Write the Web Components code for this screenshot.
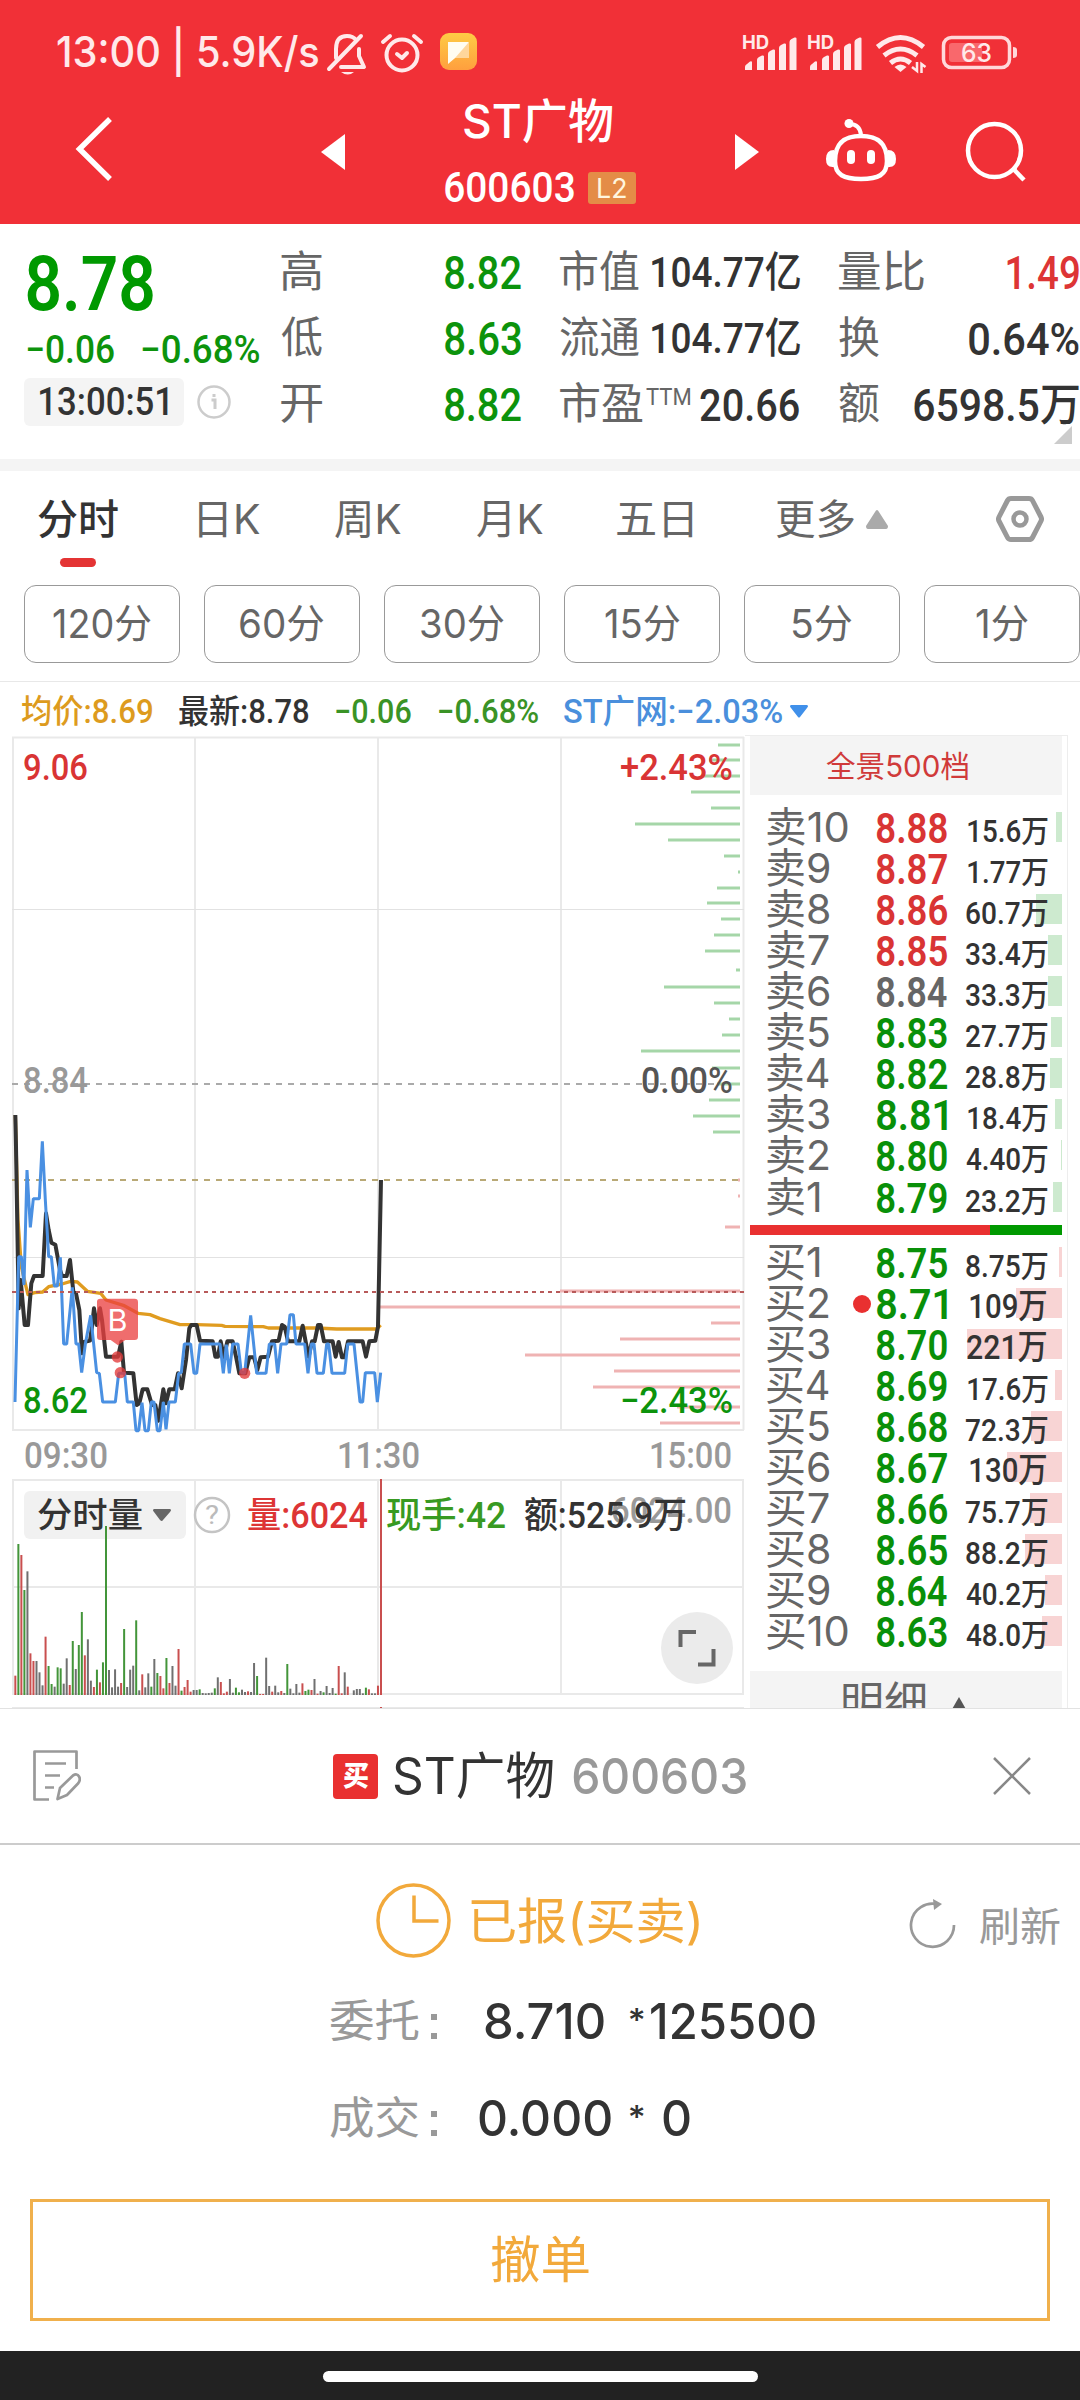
<!DOCTYPE html>
<html lang="zh-CN">
<head>
<meta charset="utf-8">
<title>ST广物 600603</title>
<style>
html,body{margin:0;padding:0;background:#fff}
body{width:1080px;height:2400px;overflow:hidden;font-family:Inter,"Noto Sans CJK SC",sans-serif;color:#333}
</style>
</head>
<body>
<stock-page></stock-page>
<script>
const DIN = "Roboto,'Noto Sans CJK SC',sans-serif";
const define = (name, html) => customElements.define(name, class extends HTMLElement {
  connectedCallback() {
    if (this.shadowRoot) return;
    const root = this.attachShadow({ mode: 'open' });
    root.innerHTML = typeof html === 'function' ? html(this) : html;
  }
});

/* One line of text whose drawn glyphs span exactly `w` pixels. */
const ruler = document.createElement('canvas').getContext('2d');
class FitText extends HTMLElement {
  connectedCallback() {
    if (this.shadowRoot) return;
    const root = this.attachShadow({ mode: 'open' });
    root.innerHTML = `<style>:host{display:block;flex:none;line-height:1;white-space:nowrap}
      span{display:inline-block;transform-origin:0 50%}</style><span><slot></slot></span>`;
    const w = +this.getAttribute('w');
    this.style.width = w + 'px';
    const cs = getComputedStyle(this);
    ruler.font = `${cs.fontWeight} ${cs.fontSize} ${cs.fontFamily}`;
    const m = ruler.measureText(this.textContent);
    const s = w / (m.actualBoundingBoxLeft + m.actualBoundingBoxRight);
    root.querySelector('span').style.transform = `translateX(${m.actualBoundingBoxLeft * s}px) scaleX(${s})`;
  }
}
customElements.define('fit-text', FitText);

const bars = '<path d="M0 70v-3q0-2 2-3l3-2.500q2-1 2 1v7.500zM12 70v-10q0-2 2-3l3-1.500q2-.5 2 1v13.500zM23 70v-16q0-2 2-3l3-1.500q2-.5 2 1v19.500zM34 70v-22q0-2 2-3l3-1.500q2-.5 2 1v25.500zM44.500 70v-28q0-2 2-3l3-1.500q2-.5 2 1v31.500z"/>';
define('status-bar', `<style>
:host{display:flex;align-items:center;height:105px;padding-left:57px;box-sizing:border-box;color:#ffe9ea;font-weight:500}
svg{display:block;flex:none;height:105px}
</style>
<fit-text w="261" style="font-size:42.500px">13:00 | 5.9K/s</fit-text>
<svg width="162" viewBox="318 0 162 105" fill="none" stroke="#ffe9ea" stroke-width="4" stroke-linecap="round" stroke-linejoin="round">
<path d="M336 58V49q0-13 11-13 6 0 9 4M359 49v7l5 11H341M361 36L329 69"/><path d="M341 72h13q-6 5-13 0z" fill="#ffe9ea" stroke="none"/>
<circle cx="402" cy="55" r="15.500"/><path d="M397 54l5 4 5-5M383 42l7-6M421 42l-7-6"/>
<defs><linearGradient id="o" x2="0" y2="1"><stop stop-color="#fecb45"/><stop offset="1" stop-color="#ff9f3e"/></linearGradient></defs>
<rect x="440" y="33" width="37" height="37" rx="9" fill="url(#o)" stroke="none"/><path d="M448 43h21v15h-14l-7 5z" fill="#ffd69b" stroke="none"/><path d="M448 42h21L455 58l-7 6z" fill="#fffdf2" stroke="none"/></svg>
<svg width="280" viewBox="742 0 280 105" style="margin-left:262px" fill="#ffe9ea">
<text x="742" y="49" font-size="18.500" font-weight="700" textLength="27" font-family="Inter">HD</text>
<text x="807" y="49" font-size="18.500" font-weight="700" textLength="27" font-family="Inter">HD</text>
<g transform="translate(745)">${bars}</g><g transform="translate(810)">${bars}</g>
<g fill="none" stroke="#ffe9ea" stroke-width="5"><path d="M877.500 47q23-19 46 0M884 55.500q16.500-13 33 0M890.500 63q10-8 20 0"/></g><path d="M894.500 67q6-5 12 0l-6 5z"/>
<path d="M917 62v9l-5-4M921.500 73V64l4 3" fill="none" stroke="#ffe9ea" stroke-width="2.500"/>
<rect x="943.500" y="37.500" width="66" height="30" rx="8" fill="none" stroke="#ffd8da" stroke-width="3.500"/><path d="M1013 47q4 0 4 3v5q0 3-4 3z" fill="#ffd8da"/><path d="M949 46q0-3 3-3h30v19h-30q-3 0-3-3z" fill="#f9686c"/>
<text x="961" y="62" font-size="26" font-weight="500" textLength="31" lengthAdjust="spacingAndGlyphs" font-family="Inter">63</text></svg>`);

define('title-bar', `<style>
:host{display:flex;align-items:center;height:119px;color:#fff;font-weight:500}
svg{display:block;flex:none}
.mid{flex:none;width:190px;height:119px;margin:0 91px 0 100px;display:flex;flex-direction:column;align-items:center}
.code{display:flex;align-items:center;gap:14px;font-family:${DIN};margin-top:27px;height:32px}
.l2{background:#e48c47;border-radius:3px;width:48px;height:32px;display:flex;align-items:center;justify-content:center;color:#fff6df;font:400 27px/1 Inter}
.name{margin:-8px 0 0 -4px;height:48px}
</style>
<svg width="345" height="119" viewBox="0 105 345 119"><path d="M110 119L79.500 149L110 179" fill="none" stroke="#fff" stroke-width="5.500"/><path d="M345 134v36L321 152z" fill="#fff"/></svg>
<div class="mid"><div class="name"><fit-text w="148" style="font-size:47px">ST广物</fit-text></div>
<div class="code"><fit-text w="129" style="font-size:42px">600603</fit-text><span class="l2"><fit-text w="28">L2</fit-text></span></div></div>
<svg width="345" height="119" viewBox="735 105 345 119" fill="none" stroke="#fff" style="margin-left:9px"><path d="M735 134v36l24-18z" fill="#fff" stroke="none"/>
<path d="M861 136c-13 0-26 4-26 25 0 14 9 18 26 18s26-4 26-18c0-21-13-25-26-25z" stroke-width="4.500"/><path d="M849 124q11 0 12 11" stroke-width="4"/><g fill="#fff" stroke="none"><circle cx="849" cy="123.500" r="4.500"/><rect x="847" y="150" width="8" height="14" rx="4"/><rect x="867" y="150" width="8" height="14" rx="4"/><path d="M834 150q-8 0-8 9t8 8zM888 150q8 0 8 9t-8 8z"/></g>
<ellipse cx="994.500" cy="150.500" rx="26.500" ry="26.500" stroke-width="4.500"/><path d="M1013 168.500l11 11.500" stroke-width="4.500"/></svg>`);

define('quote-cell', `<style>:host{display:flex;justify-content:space-between;align-items:center;height:66px}
::slotted([slot=k]){color:#666;font:400 43px/1 ${DIN};position:relative;top:-1px}
::slotted(:not([slot])){font:500 44px/1 ${DIN}}</style>
<slot name="k"></slot><slot></slot>`);
const cell = (k, kw, v, vw, c, fs) => `<quote-cell><fit-text slot="k" w="${kw}">${k}</fit-text><fit-text w="${vw}" style="color:${c};font-size:${fs}px">${v}</fit-text></quote-cell>`;
const G = '#0c930c', R = '#dd3535', K = '#333';
define('quote-panel', `<style>
:host{display:flex;padding-left:24px;box-sizing:border-box;border-bottom:12px solid #f4f4f4;height:247px;font-family:${DIN};font-weight:500}
.a{width:257px;flex:none;padding-top:23px;box-sizing:border-box;color:${G}}
.p{height:74px;display:flex;align-items:center;padding-left:3px;color:#090;font-size:76px;font-weight:600}
.d{height:40px;margin-top:9px;display:flex;align-items:center;gap:28px;padding-left:3px;font-size:39px}
.t{display:flex;align-items:center;gap:12px;margin-top:8px}
.chip{background:#f4f4f4;border-radius:6px;width:160px;height:48px;display:flex;align-items:center;justify-content:center;color:#333;font-size:38px}
.c{flex:none;width:240px;padding-top:16px}
.c+.c{margin-left:39px}
.pe{display:flex;height:66px;align-items:center;color:#666;font-weight:400}
.corner{position:absolute;left:1054px;top:426px}
</style>
<div class="a"><div class="p"><fit-text w="126">8.78</fit-text></div><div class="d"><fit-text w="87">−0.06</fit-text><fit-text w="117">−0.68%</fit-text></div>
<div class="t"><div class="chip"><fit-text w="128">13:00:51</fit-text></div><svg width="36" height="36" viewBox="-18 -18 36 36"><circle r="15.500" fill="none" stroke="#ccc" stroke-width="2.500"/><path d="M-2.500-2H1V7M0-8v3" stroke="#ccc" stroke-width="3" fill="none"/></svg></div></div>
<div class="c">${cell('高', 41, '8.82', 76, G, 46)}${cell('低', 41, '8.63', 76, G, 46)}${cell('开', 41, '8.82', 76, G, 46)}</div>
<div class="c">${cell('市值', 79, '104.77亿', 148, K, 42)}${cell('流通', 79, '104.77亿', 148, K, 42)}
<div class="pe"><fit-text w="83" style="font-size:43px;margin-top:-2px">市盈</fit-text><fit-text w="44" style="font-size:24px;margin:-17px 10px 0 3px">TTM</fit-text><fit-text w="99" style="font-size:45px;color:#333;font-weight:500">20.66</fit-text></div></div>
<div class="c">${cell('量比', 85, '1.49', 72, R, 46)}${cell('换', 40, '0.64%', 110, K, 45)}${cell('额', 40, '6598.5万', 165, K, 45)}</div>
<svg class="corner" width="18" height="18"><path d="M18 0v18H0z" fill="#ccc"/></svg>`);

define('period-tabs', `<style>
:host{display:flex;align-items:center;height:114px;padding-left:38px;box-sizing:border-box;color:#666;font-size:41px;padding-bottom:18px}
.on{color:#333;font-weight:500;display:flex;flex-direction:column;align-items:center;padding-top:28px}
.on i{display:block;width:36px;height:9px;border-radius:5px;background:#e43434;margin-top:18px}
</style>
<div class="on"><fit-text w="80">分时</fit-text><i></i></div>
<fit-text w="61" style="margin-left:81px">日K</fit-text><fit-text w="66" style="margin-left:75px">周K</fit-text><fit-text w="66" style="margin-left:76px">月K</fit-text><fit-text w="76" style="margin-left:74px">五日</fit-text><fit-text w="78" style="margin-left:83px">更多</fit-text>
<svg width="22" height="19" style="margin-left:12px"><path d="M11 0q1 0 2 2l9 14q0 3-2 3H2q-2 0-2-3L9 2q1-2 2-2z" fill="#aaa"/></svg>
<svg width="48" height="46" viewBox="0 0 48 46" style="margin-left:108px" fill="none" stroke="#999" stroke-width="5" stroke-linejoin="round"><path d="M15 2.500H33Q35.500 2.500 36.500 4.500L45 21q1 2 0 4L36.500 41.500Q35.500 43.500 33 43.500H15Q12.500 43.500 11.500 41.500L3 25q-1-2 0-4L11.500 4.500Q12.500 2.500 15 2.500z"/><circle cx="24" cy="23" r="6.500" stroke-width="4.500"/></svg>`);

define('minute-chip', `<style>:host{flex:none;width:156px;height:78px;box-sizing:border-box;border:1px solid #999;border-radius:12px;display:flex;align-items:center;justify-content:center;color:#666;font-size:40px}</style><slot></slot>`);
define('minute-chips', `<style>:host{display:flex;gap:24px;padding:0 0 18px 24px;border-bottom:1px solid #e8e8e8;overflow:hidden}</style>
${[['120分', 98], ['60分', 84], ['30分', 83], ['15分', 75], ['5分', 59], ['1分', 52]].map(([t, w]) => `<minute-chip><fit-text w="${w}">${t}</fit-text></minute-chip>`).join('')}`);

define('chart-legend', `<style>:host{display:flex;align-items:center;height:53px;box-sizing:border-box;padding:5px 0 0 22px;font:500 33px ${DIN}}</style>
<fit-text w="130" style="color:#dd9b1e">均价:8.69</fit-text><fit-text w="130" style="margin-left:27px;color:#333">最新:8.78</fit-text><fit-text w="75" style="margin-left:27px;color:#3a9326">−0.06</fit-text><fit-text w="99" style="margin-left:28px;color:#3a9326">−0.68%</fit-text><fit-text w="218" style="margin-left:26px;color:#4a8fdc">ST广网:−2.03%</fit-text>
<svg width="18" height="13" style="margin-left:8px"><path d="M1 0h16q2 1 0 3l-7 9q-1 1-2 0L1 3q-2-2 0-3z" fill="#4090ea"/></svg>`);

const price = '46,105 48,200 56,685 62,600 74,735 84,735 94,610 102,588 128,588 138,400 146,450 154,488 166,494 180,570 186,588 200,588 210,540 220,635 228,640 238,690 246,820 252,786 270,782 276,740 282,685 290,735 300,685 306,720 318,830 354,830 364,785 372,878 400,880 410,975 418,970 428,928 442,928 456,975 466,975 475,1022 490,928 498,970 508,928 524,928 534,880 545,925 558,840 568,745 574,735 590,735 600,782 638,784 646,830 654,830 662,784 672,832 682,784 698,784 708,830 718,880 736,880 748,832 762,832 772,870 782,832 804,830 816,784 836,782 846,735 854,740 864,784 898,784 908,737 918,790 926,830 936,784 944,784 954,735 962,735 972,784 998,784 1007,830 1016,786 1026,832 1034,832 1044,784 1088,784 1098,830 1108,784 1126,782 1134,740 1143,300';
const peer = '45,966 56,530 64,530 72,615 81,270 91,442 100,356 118,356 127,184 136,360 146,530 154,530 163,618 172,618 181,532 191,792 200,792 217,622 228,792 236,792 245,878 256,792 272,706 290,878 298,880 308,966 346,966 356,880 374,880 382,966 400,966 408,1052 416,1052 426,968 435,1052 445,1052 454,966 462,966 472,1052 480,1052 490,966 498,1048 507,966 526,966 536,880 544,878 553,792 572,792 582,880 590,880 600,792 660,792 670,880 679,794 688,880 698,792 714,792 724,878 734,880 752,706 770,880 798,880 808,792 824,792 833,880 843,792 860,792 870,704 880,704 888,792 914,792 924,880 934,792 942,792 951,880 970,880 980,792 986,792 996,880 1034,880 1043,792 1062,792 1080,966 1088,966 1096,878 1124,878 1132,966 1142,878';
const avg = '46,105 54,420 64,560 78,620 84,644 104,638 128,636 146,620 186,612 212,604 232,606 262,634 302,640 318,660 370,676 414,700 450,704 480,716 540,734 590,734 665,736 675,739 790,740 805,744 950,744 1010,747 1130,747 1142,735';
const vol = 'r647 g252 r285 g390 k334 r580 r603 k603 k637 k676 r530 g618 g672 k680 g622 g625 k671 k595 r675 g543 k627 g555 g456 r586 k538 k662 r681 g629 r667 g607 g198 k630 k682 k628 k680 r669 g507 k681 k629 k617 g481 k691 r643 k682 k640 g680 k597 g639 r648 r685 g594 r669 k618 k677 r567 g692 r681 r660 r695 k690 k690 g688 k699 k700 k699 k698 g685 k652 r666 r700 r695 k657 k698 g683 g697 k689 k696 r694 k696 k609 g648 r702 r702 k593 k678 r695 k677 k697 r693 k699 g612 k686 k700 k672 k698 r670 g693 g689 r690 k657 r701 k693 g697 k678 k699 k684 g701 r618 r700 k637 r680 k705 k691 k687 k687 k700 g683 r688 k700 k700 r677 r57'.split(' ');
const depth = [['g', [[745, 718], [760, 709], [776, 702], [792, 691], [808, 711], [824, 635], [840, 668], [856, 724], [872, 738], [888, 717], [903, 707], [919, 721], [935, 714], [951, 705], [970, 736], [987, 664], [1003, 714], [1019, 729], [1035, 722], [1051, 641], [1068, 712], [1084, 717], [1100, 709], [1116, 693], [1132, 713]]],
  ['r', [[1180, 738], [1196, 738], [1227, 725], [1291, 560], [1307, 380], [1323, 711], [1339, 620], [1355, 525], [1371, 614], [1387, 593], [1407, 677], [1423, 660]]]];
const hues = { r: '#c94f4f', g: '#43953a', k: '#707070' };
const label = (x, y, w, t, c, s = 36) => `<text x="${x}" y="${y}" font-size="${s}" fill="${c}" textLength="${w}" lengthAdjust="spacingAndGlyphs">${t}</text>`;
define('intraday-chart', `<style>:host{display:block;width:745px;height:973px;flex:none}svg{display:block;font:500 36px ${DIN}}</style>
<svg width="745" height="973" viewBox="0 735 745 973">
<g stroke="#e9e9e9" stroke-width="2" fill="none"><path d="M12 737.500H744M12 1430H744M12 1480H744M12 1587H744M12 1694H744M12 1708H744M13 737V1430M195 737V1430M378 737V1430M561 737V1430M743.500 737V1430M13 1480V1694M195 1480V1694M378 1480V1694M561 1480V1694M743 1480V1694"/><path d="M12 909.500H744M12 1257.500H744" stroke-width="1.200" stroke="#e2e2e2"/></g>
<path d="M12 1084H740" stroke="#aaa" stroke-width="2" stroke-dasharray="6 6"/>
<path d="M12 1180H740" stroke="#b9a976" stroke-width="2" stroke-dasharray="6 6"/>
${depth.map(([c, l]) => l.map(([y, x]) => `<path d="M${x} ${y}H740" stroke="${c === 'g' ? '#a5d6a8' : '#efb3b3'}" stroke-width="3"/>`).join('')).join('')}
<g transform="translate(0 1080) scale(.33333)" fill="none" stroke-linejoin="round">
<polyline points="${avg}" stroke="#e09c20" stroke-width="10"/><polyline points="${price}" stroke="#333" stroke-width="12"/><polyline points="${peer}" stroke="#4a90e2" stroke-width="9" stroke-linejoin="bevel"/></g>
<path d="M12 1292H744" stroke="#b85a5a" stroke-width="2" stroke-dasharray="4 4"/>
<g transform="translate(0 1080) scale(.33333)"><g fill="#e23a3a" fill-opacity=".78"><circle cx="352" cy="831" r="17"/><circle cx="361" cy="878" r="17"/><circle cx="734" cy="880" r="17"/></g>
<path d="M301 656H404q10 0 10 10V770q0 10-10 10H376L354 796L332 780H301q-10 0-10-10V666q0-10 10-10z" fill="#ea3f3f" fill-opacity=".76"/></g>
<text x="107.500" y="1331" font-size="30" font-weight="400" fill="#fff" textLength="20" lengthAdjust="spacingAndGlyphs" font-family="Inter">B</text>
${label(23, 780, 65, '9.06', '#d93434')}${label(23, 1093, 65, '8.84', '#999')}${label(23, 1413, 65, '8.62', G)}
${label(620, 780, 113, '+2.43%', '#d93434')}${label(641, 1093, 92, '0.00%', '#555')}${label(620, 1413, 113, '−2.43%', G)}
${label(24, 1468, 84, '09:30', '#999')}${label(337, 1468, 83, '11:30', '#999')}${label(649, 1468, 83, '15:00', '#999')}
<rect x="24" y="1491" width="162" height="48" rx="6" fill="#f1f1f1"/>
<g transform="translate(0 1460) scale(.33333)">${vol.map((v, i) => `<rect x="${(43 + 9.066 * i).toFixed(1)}" y="${v.slice(1)}" width="6" height="${705 - v.slice(1)}" fill="${hues[v[0]]}"/>`).join('')}</g>
<path d="M381 1707v2" stroke="#c94f4f" stroke-width="2"/>
${label(37, 1527, 106, '分时量', '#333', 34)}<path d="M154 1509h16q2 1 0 3l-7 8q-1 2-3 0l-6-8q-2-2 0-3z" fill="#666"/>
<circle cx="212" cy="1515" r="17" fill="none" stroke="#c4c4c4" stroke-width="2.500"/>
<text x="205" y="1524" font-size="25" font-weight="400" fill="#bbb" textLength="14" lengthAdjust="spacingAndGlyphs">?</text>
${label(611, 1523, 121, '6024.00', '#999')}
${label(247, 1528, 121, '量:6024', '#dd3535')}${label(386, 1528, 120, '现手:42', '#389a22')}${label(524, 1528, 163, '额:525.9万', '#333')}
<circle cx="697" cy="1648" r="36" fill="#ebebeb"/><path d="M680.500 1647V1632H696M698 1664.500H713.500V1649" fill="none" stroke="#666" stroke-width="4"/>
</svg>`);

/* Order book level: side, price, size and the width of its size bar. */
define('book-row', el => {
  const a = n => el.getAttribute(n), s = a('side'), n = a('n'), q = a('qty');
  return `<style>:host{display:flex;align-items:center;height:41px;box-sizing:border-box;padding:0 14px 0 17px;font:500 43px ${DIN};
background:linear-gradient(${s === '卖' ? '#cdeacf,#cdeacf' : '#f8d4d4,#f8d4d4'}) right 5px/${a('bar')}px 30px no-repeat}
.n{width:${a('dot') ? 86 : 110}px;color:#666;font-weight:400;flex:none;font-family:Inter,"Noto Sans CJK SC";font-size:41px}
.p{color:${a('color')};font-weight:600;margin-top:1px}
i{width:18px;height:18px;border-radius:50%;background:#e93030;margin-right:6px;flex:none}
.q{margin:7px 0 0 auto;color:#333;font-size:31px}</style>
<div class="n"><fit-text w="${n === '10' ? 81 : n === '1' ? 53 : 62}">${s}${n}</fit-text></div>${a('dot') ? '<i></i>' : ''}<fit-text class="p" w="70">${a('price')}</fit-text><fit-text class="q" w="${q.includes('.') ? (q[0] === '1' ? 80 : 82) : (q[0] === '1' ? 76 : 79)}" ${q.includes('.') ? '' : 'style="font-size:34px;margin-right:2px;margin-top:5px"'}>${q}</fit-text>`;
});
const RP = '#d93434', GP = '#099009';
const sells = [[10, '8.88', '15.6万', 6, RP], [9, '8.87', '1.77万', 0, RP], [8, '8.86', '60.7万', 26, RP], [7, '8.85', '33.4万', 14, RP], [6, '8.84', '33.3万', 14, '#666'], [5, '8.83', '27.7万', 11, GP], [4, '8.82', '28.8万', 12, GP], [3, '8.81', '18.4万', 7, GP], [2, '8.80', '4.40万', 1, GP], [1, '8.79', '23.2万', 9, GP]];
const buys = [[1, '8.75', '8.75万', 3], [2, '8.71', '109万', 46], [3, '8.70', '221万', 95], [4, '8.69', '17.6万', 7], [5, '8.68', '72.3万', 31], [6, '8.67', '130万', 55], [7, '8.66', '75.7万', 32], [8, '8.65', '88.2万', 37], [9, '8.64', '40.2万', 17], [10, '8.63', '48.0万', 20]];
const row = (s, [n, p, q, b, c]) => `<book-row side="${s}" n="${n}" price="${p}" qty="${q}" bar="${b}" color="${c || GP}" ${p === '8.71' ? 'dot="1"' : ''}></book-row>`;
define('order-book', `<style>
:host{display:block;width:323px;height:973px;box-sizing:border-box;border:1px solid #ededed;border-width:1px 1px 0 0;padding:0 5px;overflow:hidden}
.h{height:59px;background:#f4f4f4;display:flex;align-items:center;justify-content:center;color:#d03a3a;font-size:30px;margin-bottom:12px;box-sizing:border-box;padding-right:18px}
.sell book-row:last-child{margin-top:1px}
.ratio{display:flex;height:10px;margin:7px 0;background:#090}.ratio i{width:240px;background:#e93030}
.more{display:flex;background:#f4f4f4;height:60px;margin-top:19px;padding:10px 0 0 93px;box-sizing:border-box;color:#666;font-size:43px;gap:26px}
</style>
<div class="h"><fit-text w="142">全景500档</fit-text></div>
<div class="sell">${sells.map(r => row('卖', r)).join('')}</div><div class="ratio"><i></i></div><div>${buys.map(r => row('买', r)).join('')}</div>
<div class="more"><fit-text w="82">明细</fit-text><svg width="16" height="14" style="margin-top:16px"><path d="M8 0l8 14H0z" fill="#555"/></svg></div>`);

define('order-line', `<style>:host{display:flex;align-items:center;height:97px;padding-left:330px;color:#333;font-size:50px;font-weight:500}
::slotted([slot=k]){color:#999;font-weight:400;font-size:44px;margin-right:11px}
svg{flex:none;margin:12px 43px 0 0}</style><slot name="k"></slot><svg width="8" height="28" fill="#999"><rect x="1" y="1" width="6" height="6"/><rect x="1" y="20" width="6" height="6"/></svg><slot></slot>`);
define('trade-sheet', `<style>
:host{display:block;height:643px;background:#fff;border-top:1px solid #e2e2e2;box-sizing:border-box;overflow:hidden}
.h{display:flex;align-items:center;height:134px;border-bottom:2px solid #ccc;padding-left:33px;box-sizing:content-box;font-size:50px}
.b{width:45px;height:45px;border-radius:4px;background:#e93030;display:flex;align-items:center;justify-content:center;color:#fff;font-weight:900;font-size:28px;margin:0 16px 0 252px}
.s{display:flex;align-items:center;height:78px;margin:37px 0 12px;padding-left:375px;color:#f2a93b;font-size:49px}
svg{flex:none}
.x{height:122px;margin:33px 30px 0;box-sizing:border-box;border:3px solid #f0b04c;display:flex;align-items:center;justify-content:center;color:#f2a93b;font-size:50px}
</style>
<div class="h"><svg width="48" height="52" viewBox="33 1750 48 52" fill="none" stroke="#999" stroke-width="2.700" stroke-linejoin="round"><path d="M49 1799.500H34.500V1751.500H76.500V1769M45 1763.500H66M45 1775.500H60M45 1787.500H54"/><path d="M57.500 1799L60 1788L73 1775.500Q77 1773 79 1776.500Q81 1780 78 1783.500L67 1795z"/></svg>
<div class="b"><fit-text w="26">买</fit-text></div><fit-text w="159" style="color:#333">ST广物</fit-text><fit-text w="173" style="color:#999;font-weight:500;margin-left:20px">600603</fit-text>
<svg width="38" height="38" style="margin-left:247px" stroke="#888" stroke-width="2.500"><path d="M1 1l36 36M37 1L1 37"/></svg></div>
<div class="s"><svg width="77" height="78" viewBox="375 1882 77 78" fill="none" stroke="#f2a93b" stroke-width="3.500"><circle cx="413.500" cy="1920.500" r="35.500"/><path d="M414 1895.500V1921H438.500"/></svg><fit-text w="228" style="margin-left:19px">已报(买卖)</fit-text>
<svg width="50" height="60" viewBox="908 1896 50 60" fill="none" stroke="#999" stroke-width="2.700" style="margin:8px 0 0 210px"><path d="M953 1926A21.500 21.500 0 1 1 937 1905.500"/><path d="M932 1900l9 5-8 6z" fill="#999" stroke="none"/></svg><fit-text w="80" style="margin:11px 0 0 21px;font-size:40px;color:#999">刷新</fit-text></div>
<order-line><fit-text slot="k" w="89">委托</fit-text><fit-text w="119" style="margin-left:4px">8.710</fit-text><fit-text w="14" style="margin-left:26px;font-size:32px">*</fit-text><fit-text w="164" style="margin-left:7px">125500</fit-text></order-line>
<order-line><fit-text slot="k" w="89">成交</fit-text><fit-text w="132" style="margin-left:-2px">0.000</fit-text><fit-text w="14" style="margin-left:19px;font-size:32px">*</fit-text><fit-text w="27" style="margin-left:19px">0</fit-text></order-line>
<div class="x"><fit-text w="98">撤单</fit-text></div>`);

define('nav-bar', `<style>:host{display:flex;height:49px;background:#222;justify-content:center;align-items:center;padding-top:1px;box-sizing:border-box}i{width:435px;height:11px;border-radius:6px;background:#fff}</style><i></i>`);

define('stock-page', `<style>:host{display:block;width:1080px;height:2400px;overflow:hidden;position:relative;background:#fff}header{background:#f13037;height:224px}main{display:flex}</style>
<header><status-bar></status-bar><title-bar></title-bar></header>
<quote-panel></quote-panel><period-tabs></period-tabs><minute-chips></minute-chips><chart-legend></chart-legend>
<main><intraday-chart></intraday-chart><order-book></order-book></main>
<trade-sheet></trade-sheet><nav-bar></nav-bar>`);
</script>
</body>
</html>
